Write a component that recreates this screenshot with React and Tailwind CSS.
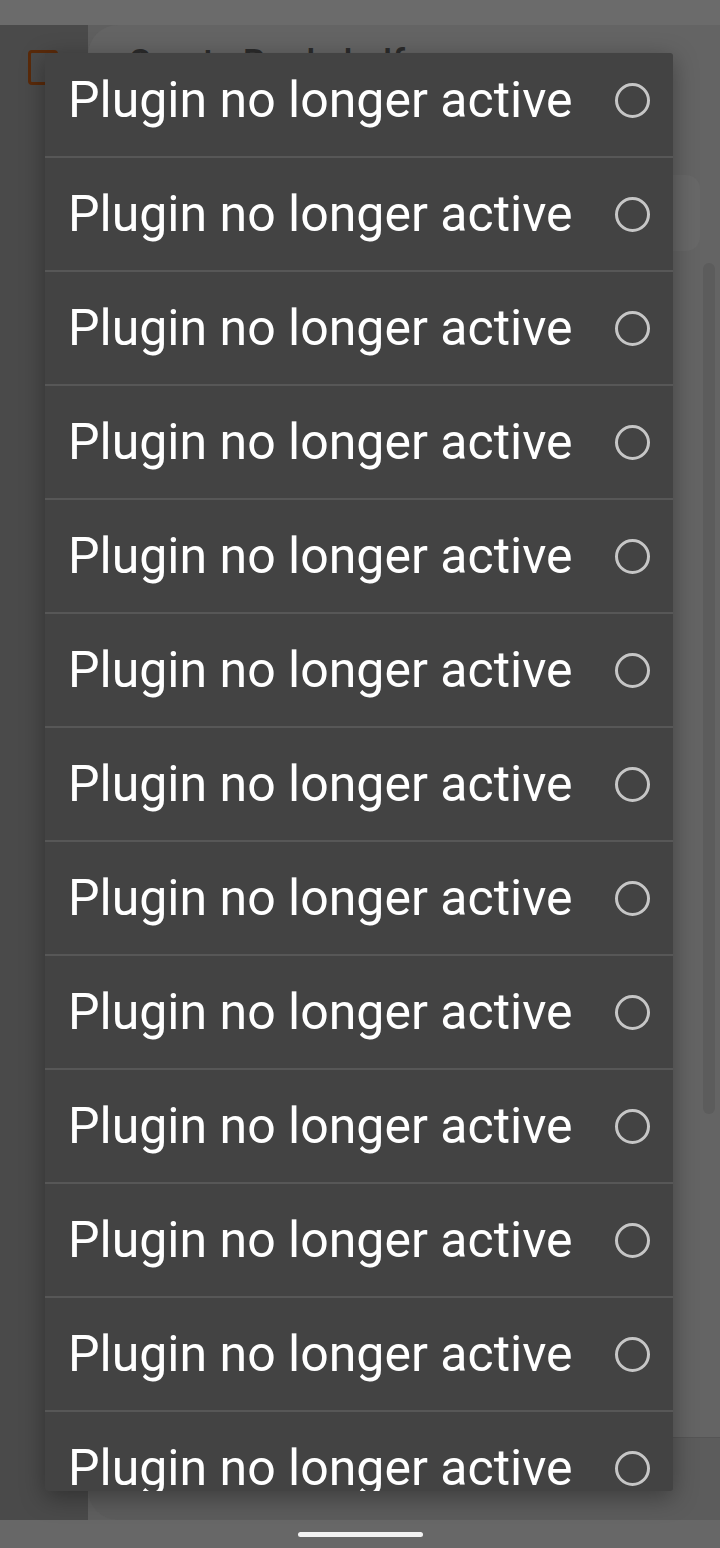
import { useState } from "react"

const ITEMS = Array.from({ length: 13 }, (_, i) => ({ id: i, label: "Plugin no longer active" }))

function Radio({ checked }) {
  return (
    <span className="flex h-[35px] w-[35px] shrink-0 items-center justify-center rounded-full border-[3px] border-[#c6c6c6]">
      {checked && <span className="h-[17px] w-[17px] rounded-full bg-[#c6c6c6]" />}
    </span>
  )
}

export default function App() {
  const [selected, setSelected] = useState(null)

  return (
    <div className="relative flex h-[1548px] w-[720px] flex-col overflow-hidden bg-[#5f5f5f] font-['Roboto',sans-serif]">
      {/* Dimmed status bar */}
      <div className="h-[25px] shrink-0 bg-[#6b6b6b]" />

      {/* Dimmed page behind */}
      <div className="flex min-h-0 flex-1">
        <div className="flex w-[88px] shrink-0 flex-col bg-[#4a4a4a] pl-[28px] pt-[25px]">
          <div className="h-[35px] w-[30px] rounded-[4px] border-[3px] border-[#5a2a0a]" />
        </div>
        <div className="flex flex-1 flex-col rounded-l-[30px] bg-[#646464]">
          <div className="h-[28px] overflow-hidden px-[40px] pt-[20px] text-[36px] font-medium leading-none text-[#2b2b2b]">
            Create Bookshelf
          </div>
          <div className="mr-[20px] mt-[122px] h-[76px] rounded-[14px] bg-[#686868]" />
          <div className="flex flex-1 justify-end pr-[5px] pt-[12px]">
            <div className="h-[851px] w-[12px] rounded-full bg-[#5c5c5c]" />
          </div>
          <div className="h-[83px] rounded-bl-[30px] border-t border-[#555555] bg-[#5c5c5c]" />
        </div>
      </div>

      {/* Dimmed nav bar */}
      <div className="flex h-[28px] shrink-0 items-center justify-center bg-[#676767]">
        <div className="h-[5px] w-[125px] rounded-full bg-[#f2f2f2]" />
      </div>

      {/* Dialog */}
      <div className="absolute left-[45px] top-[53px] h-[1438px] w-[628px] overflow-hidden rounded-[3px] bg-[#434343] shadow-[0_6px_24px_rgba(0,0,0,0.35)]">
        <div className="-mt-[9px] flex flex-col">
          {ITEMS.map((item) => (
            <button
              key={item.id}
              onClick={() => setSelected(item.id)}
              className="flex h-[114px] shrink-0 items-center justify-between border-b-2 border-[#575757] pl-[23px] pr-[23px] text-left"
            >
              <span className="text-[50px] leading-none text-white">{item.label}</span>
              <Radio checked={selected === item.id} />
            </button>
          ))}
        </div>
      </div>
    </div>
  )
}
